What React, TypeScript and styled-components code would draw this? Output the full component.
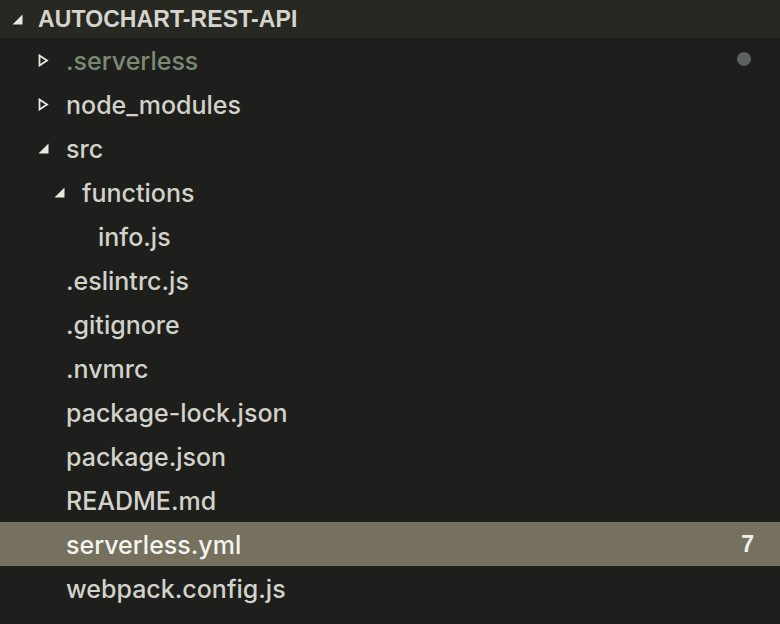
import { createGlobalStyle, styled } from "styled-components";

const GlobalStyle = createGlobalStyle`
  html, body {
    margin: 0;
    padding: 0;
    background: #1e1f1c;
  }
  body {
    font-family: Inter, "Liberation Sans", Arial, sans-serif;
    -webkit-font-smoothing: antialiased;
  }
`;

type Node = {
  name: string;
  depth: number;
  arrow?: "open" | "closed";
  muted?: boolean;
  selected?: boolean;
  badge?: string;
  dot?: boolean;
};

const tree: Node[] = [
  { name: ".serverless", depth: 0, arrow: "closed", muted: true, dot: true },
  { name: "node_modules", depth: 0, arrow: "closed" },
  { name: "src", depth: 0, arrow: "open" },
  { name: "functions", depth: 1, arrow: "open" },
  { name: "info.js", depth: 2 },
  { name: ".eslintrc.js", depth: 0 },
  { name: ".gitignore", depth: 0 },
  { name: ".nvmrc", depth: 0 },
  { name: "package-lock.json", depth: 0 },
  { name: "package.json", depth: 0 },
  { name: "README.md", depth: 0 },
  { name: "serverless.yml", depth: 0, selected: true, badge: "7" },
  { name: "webpack.config.js", depth: 0 },
];

const OpenArrow = () => (
  <svg width="11" height="11" viewBox="0 0 11 11">
    <polygon points="10.5,0.5 10.5,10.5 0.5,10.5" fill="#e8e8e0" />
  </svg>
);

const ClosedArrow = () => (
  <svg width="11" height="13" viewBox="0 0 11 13">
    <polygon
      points="1.5,1.5 9,6.5 1.5,11.5"
      fill="none"
      stroke="#e8e8e0"
      strokeWidth="1.8"
    />
  </svg>
);

export default function App() {
  return (
    <>
      <GlobalStyle />
      <Sidebar>
        <Header>
          <Twisty $width={26}>
            <OpenArrow />
          </Twisty>
          <HeaderTitle>AUTOCHART-REST-API</HeaderTitle>
        </Header>
        <List>
          {tree.map((n) => (
            <Row key={n.name} $depth={n.depth} $selected={n.selected}>
              <Twisty $width={30}>
                {n.arrow === "open" && <OpenArrow />}
                {n.arrow === "closed" && <ClosedArrow />}
              </Twisty>
              <Label $muted={n.muted} $selected={n.selected}>
                {n.name}
              </Label>
              {n.dot && <Dot />}
              {n.badge && <Badge>{n.badge}</Badge>}
            </Row>
          ))}
        </List>
      </Sidebar>
    </>
  );
}

const Sidebar = styled.div`
  width: 780px;
  height: 624px;
  background: #1e1f1c;
  display: flex;
  flex-direction: column;
  overflow: hidden;
`;

const Header = styled.div`
  height: 38px;
  background: #272822;
  display: flex;
  align-items: center;
  padding-left: 10px;
  box-sizing: border-box;
`;

const HeaderTitle = styled.div`
  font-family: "Liberation Sans", Arial, sans-serif;
  font-size: 23px;
  font-weight: bold;
  color: #d4d4cc;
  letter-spacing: 0.1px;
  margin-left: 2px;
`;

const List = styled.div`
  display: flex;
  flex-direction: column;
`;

const Row = styled.div<{ $depth: number; $selected?: boolean }>`
  height: 44px;
  display: flex;
  align-items: center;
  padding-left: ${(p) => 36 + p.$depth * 16}px;
  padding-right: 26px;
  background: ${(p) => (p.$selected ? "#75715e" : "transparent")};
  box-sizing: border-box;
`;

const Twisty = styled.div<{ $width: number }>`
  width: ${(p) => p.$width}px;
  flex: none;
  display: flex;
  align-items: center;
  padding-left: 2px;
  box-sizing: border-box;
`;

const Label = styled.div<{ $muted?: boolean; $selected?: boolean }>`
  flex: 1;
  font-size: 25px;
  font-weight: 500;
  color: ${(p) => (p.$muted ? "#7c8a74" : p.$selected ? "#f4f4f0" : "#d2d2ca")};
  white-space: nowrap;
  padding-top: 2px;
`;

const Dot = styled.div`
  width: 14px;
  height: 14px;
  border-radius: 50%;
  background: #5e625c;
  margin-right: 3px;
  margin-top: -3px;
`;

const Badge = styled.div`
  font-family: "Liberation Sans", Arial, sans-serif;
  font-size: 23px;
  font-weight: bold;
  color: #f0f0ea;
`;
